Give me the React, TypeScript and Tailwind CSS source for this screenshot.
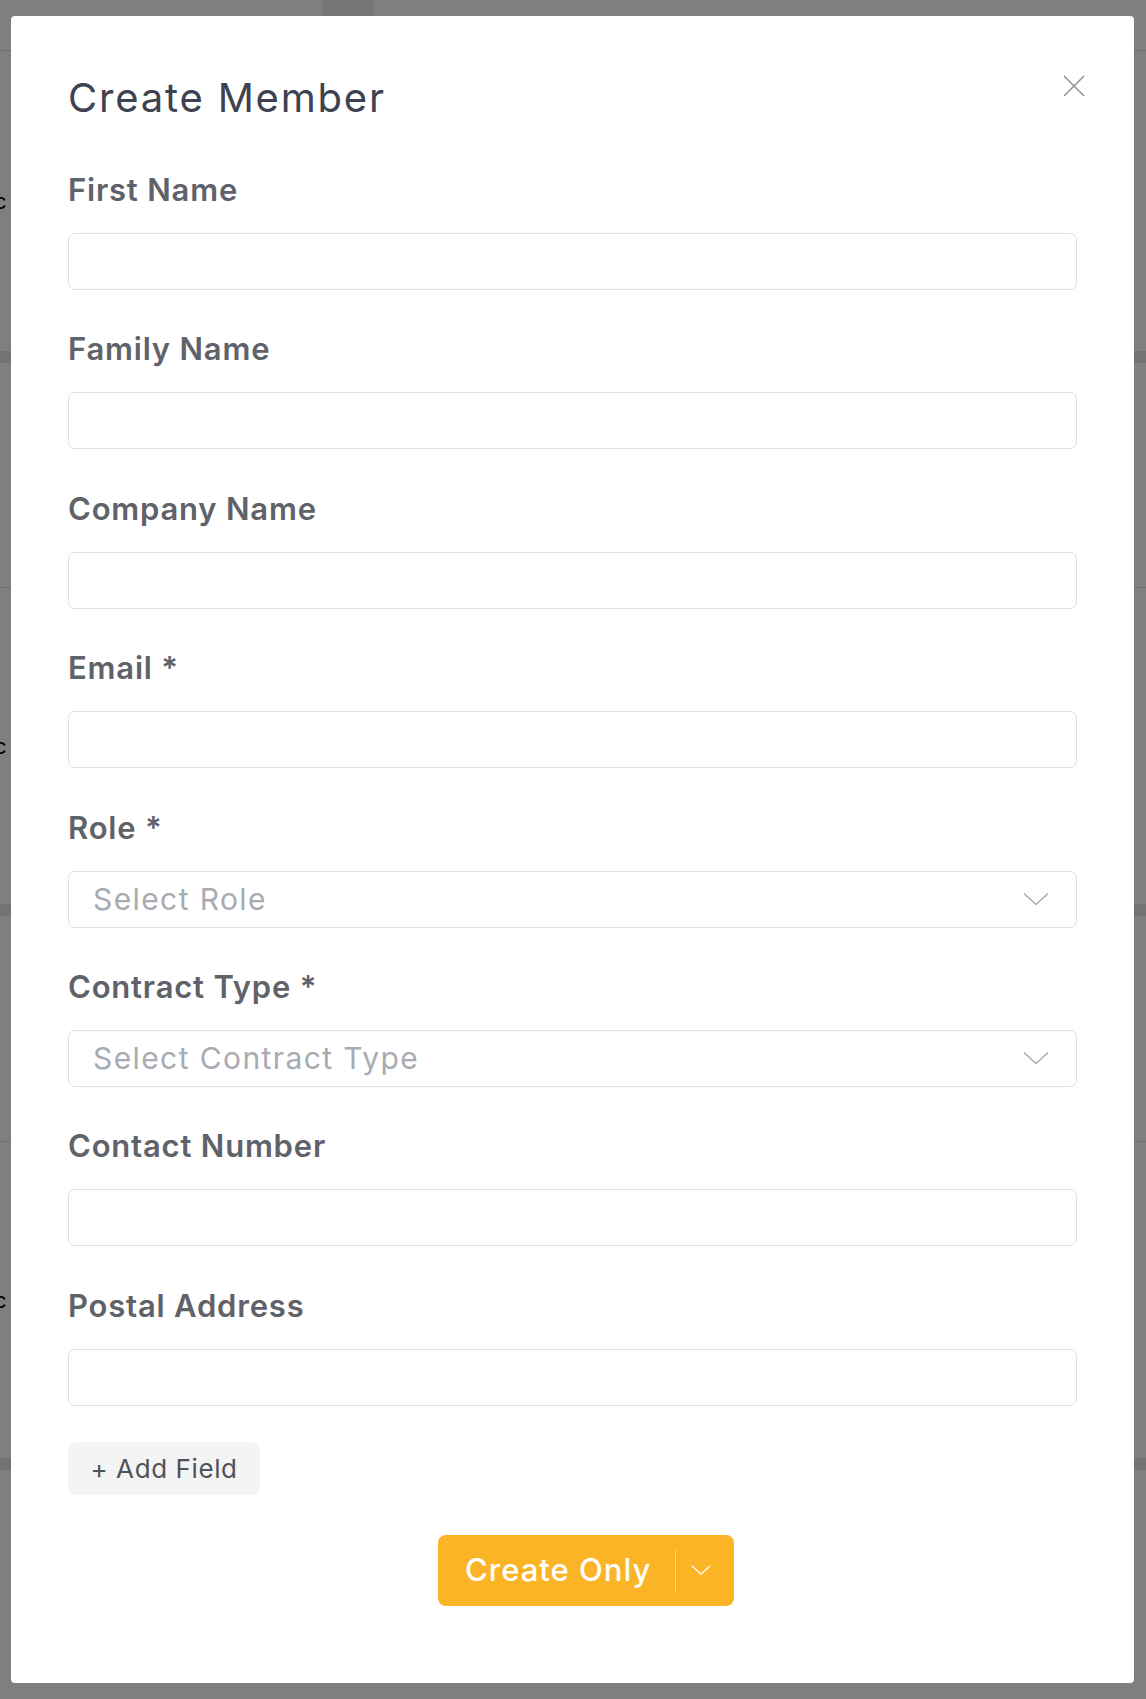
import React from 'react';

const fields = [
  { label: 'First Name' },
  { label: 'Family Name' },
  { label: 'Company Name' },
  { label: 'Email *' },
  { label: 'Role *', placeholder: 'Select Role' },
  { label: 'Contract Type *', placeholder: 'Select Contract Type' },
  { label: 'Contact Number' },
  { label: 'Postal Address' },
];

const Chevron = ({ className }: { className?: string }) => (
  <svg viewBox="0 0 26 14" className={className} fill="none">
    <polyline points="1,1.5 13,12.5 25,1.5" stroke="currentColor" strokeWidth="1.6" />
  </svg>
);

const Background = () => (
  <div className="w-full h-[1699px] bg-white flex flex-col">
    {/* page behind the dialog */}
    <div className="h-[51px] border-b border-[#d9d9d9] flex">
      <div className="w-[323px]" />
      <div className="w-[50px] bg-[#ececec]" />
    </div>
    <div className="h-[300px] flex items-center">
      <span className="-ml-[6px] text-[22px] text-black">c</span>
    </div>
    <div className="h-[12px] bg-[#e6e6e6]" />
    <div className="h-[225px] border-b border-[#dcdcdc]" />
    <div className="h-[316px] flex items-center">
      <span className="-ml-[6px] text-[22px] text-black">c</span>
    </div>
    <div className="h-[12px] bg-[#e6e6e6]" />
    <div className="h-[226px] border-b border-[#dcdcdc]" />
    <div className="h-[316px] flex items-center">
      <span className="-ml-[6px] text-[22px] text-black">c</span>
    </div>
    <div className="h-[12px] bg-[#e6e6e6]" />
  </div>
);

export default function App() {
  return (
    <div className="relative w-[1146px] h-[1699px] overflow-hidden" style={{ fontFamily: 'Inter, "Noto Sans", sans-serif' }}>
      <Background />
      <div className="absolute inset-0 bg-black/50 pl-[11px] pt-[16px]">
        <div className="relative w-[1123px] h-[1667px] bg-white rounded-[4px] px-[57px] pt-[58px]">
          <h2 className="h-[48px] leading-[48px] text-[40px] font-normal text-[#3c4250] tracking-[1.8px]">
            Create Member
          </h2>
          <button className="absolute right-[49px] top-[59px] w-[22px] h-[22px] text-[#8d9099]">
            <svg viewBox="0 0 22 22" className="w-[22px] h-[22px]" fill="none">
              <path d="M1 1L21 21M21 1L1 21" stroke="currentColor" strokeWidth="1.5" />
            </svg>
          </button>

          <div className="mt-[48px] flex flex-col gap-[39.4px]">
            {fields.map((f) => (
              <div key={f.label} className="flex flex-col">
                <label className="h-[40px] leading-[40px] text-[31px] font-semibold text-[#5f6269] tracking-[0.8px] mb-[23px]">
                  {f.label}
                </label>
                {f.placeholder ? (
                  <div className="h-[57px] border border-[#dcdfe6] rounded-[7px] pl-[24px] pr-[27px] flex items-center justify-between">
                    <span className="text-[30px] text-[#a8abb2] tracking-[1.4px]">{f.placeholder}</span>
                    <Chevron className="w-[26px] h-[14px] text-[#a8abb2]" />
                  </div>
                ) : (
                  <input className="h-[57px] border border-[#dcdfe6] rounded-[7px] px-[24px] outline-none" />
                )}
              </div>
            ))}
          </div>

          <button className="mt-[36px] h-[53px] w-[192px] bg-[#f4f4f5] rounded-[7px] text-[26px] text-[#505258] tracking-[0.6px] flex items-center justify-center">
            + Add Field
          </button>

          <div className="mt-[40px] flex justify-center pl-[27px]">
            <div className="h-[71px] w-[296px] bg-[#fbb425] rounded-[8px] flex items-center pl-[27px]">
              <span className="text-[31px] font-medium text-white tracking-[1px] w-[185px] whitespace-nowrap">Create Only</span>
              <div className="ml-[25px] w-px h-[43px] bg-[#f7d58c]" />
              <Chevron className="ml-[15px] w-[20px] h-[12px] text-white" />
            </div>
          </div>
        </div>
      </div>
    </div>
  );
}
